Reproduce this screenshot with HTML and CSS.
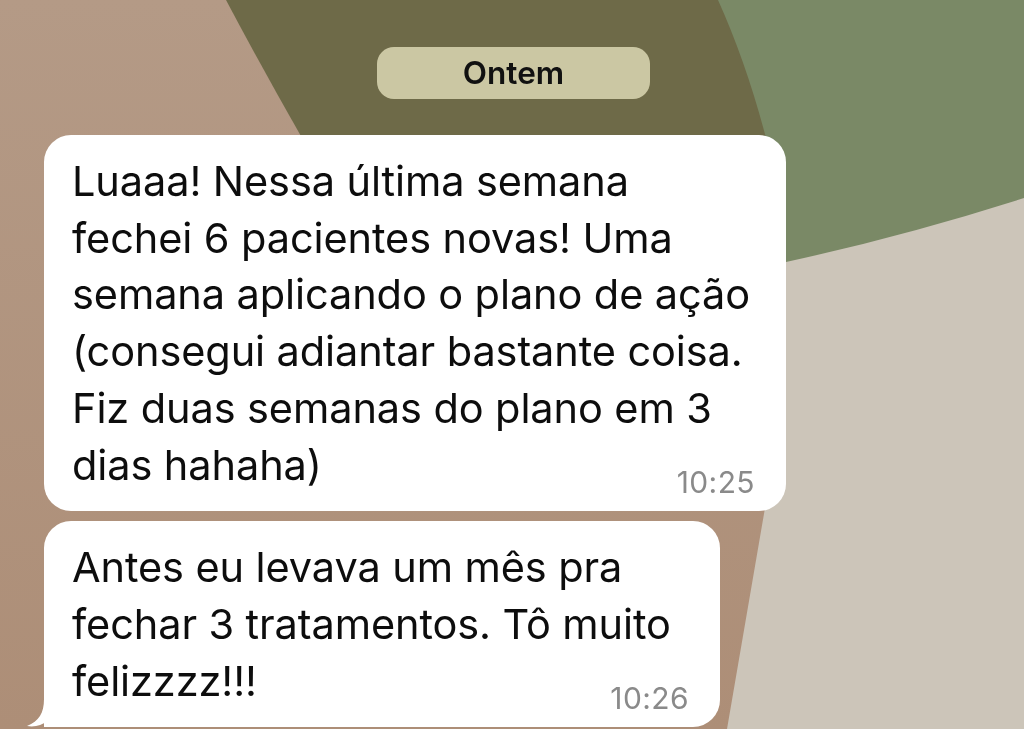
FILE: index.html
```html
<!DOCTYPE html>
<html lang="pt-BR">
<head>
<meta charset="utf-8">
<title>Conversa</title>
<link rel="stylesheet" href="styles.css">
</head>
<body>
<div class="wallpaper" aria-hidden="true">
  <svg class="wallpaper-svg" viewBox="0 0 1024 729" preserveAspectRatio="none">
    <defs>
      <linearGradient id="tan" x1="0" y1="0" x2="0" y2="1">
        <stop offset="0" stop-color="#b49a86"/>
        <stop offset="1" stop-color="#ad8e77"/>
      </linearGradient>
    </defs>
    <rect x="0" y="0" width="1024" height="729" fill="url(#tan)"/>
    <path d="M226 0 Q262 68 302 138 L600 320 L780 300 L780 0 Z" fill="#6e6a48"/>
    <path d="M718 0 Q746 62 766 138 L760 310 L1024 310 L1024 0 Z" fill="#7a8966"/>
    <path d="M770 266 L786 262 Q905 236 1024 198 L1024 729 L727 729 L765 508 L772 400 Z" fill="#ccc5b9"/>
  </svg>
</div>

<main class="chat">
  <div class="date-row">
    <span class="date-pill">Ontem</span>
  </div>

  <div class="bubble bubble-first">
    <p class="msg-text"><span class="ln">Luaaa! Nessa última semana</span><br><span class="ln">fechei 6 pacientes novas! Uma</span><br><span class="ln">semana aplicando o plano de ação</span><br><span class="ln">(consegui adiantar bastante coisa.</span><br><span class="ln">Fiz duas semanas do plano em 3</span><br><span class="ln">dias hahaha)</span></p>
    <div class="meta">10:25</div>
  </div>

  <div class="bubble bubble-second">
    <p class="msg-text"><span class="ln">Antes eu levava um mês pra</span><br><span class="ln">fechar 3 tratamentos. Tô muito</span><br><span class="ln">felizzzz!!!</span></p>
    <div class="meta">10:26</div>
    <svg class="tail" viewBox="0 0 30 32" aria-hidden="true">
      <path d="M17 0 L17 4 C17 18 12 26 0 31 C8 32.5 15 30 20 26 C24 29 27 31 30 32 L17 32 Z" fill="#ffffff"/>
    </svg>
  </div>
</main>
</body>
</html>
```

FILE: styles.css
```css
html, body {
  margin: 0;
  padding: 0;
  height: 100%;
  overflow: hidden;
}

body {
  font-family: "Inter", "Noto Sans", sans-serif;
  color: #0d0d0d;
  background: #b39a85;
}

.wallpaper {
  position: fixed;
  inset: 0;
  z-index: 0;
}

.wallpaper-svg {
  display: block;
  width: 100%;
  height: 100%;
}

.chat {
  position: relative;
  z-index: 1;
  display: flex;
  flex-direction: column;
  align-items: flex-start;
  padding-top: 47px;
}

.date-row {
  align-self: stretch;
  display: flex;
  justify-content: center;
  padding-left: 3px;
  margin-bottom: 36px;
}

.date-pill {
  box-sizing: border-box;
  width: 273px;
  height: 52px;
  border-radius: 17px;
  background: #cbc7a3;
  color: #111111;
  font-size: 31.5px;
  font-weight: 600;
  line-height: 52px;
  text-align: center;
}

.bubble {
  position: relative;
  box-sizing: border-box;
  margin-left: 44px;
  background: #ffffff;
  border-radius: 27px;
  padding: 18px 0 14px 28px;
}

.bubble-first {
  width: 742px;
  margin-bottom: 10px;
}

.bubble-second {
  width: 676px;
  border-bottom-left-radius: 0;
}

.msg-text {
  margin: 0;
  font-size: 41.5px;
  line-height: 56.7px;
  white-space: nowrap;
  letter-spacing: -0.1px;
}

.meta {
  margin-top: -26px;
  padding-right: 31px;
  text-align: right;
  font-size: 30px;
  line-height: 30px;
  letter-spacing: 0.4px;
  color: #8a8a8a;
}

.tail {
  position: absolute;
  left: -17px;
  bottom: 0;
  width: 30px;
  height: 32px;
}
```
